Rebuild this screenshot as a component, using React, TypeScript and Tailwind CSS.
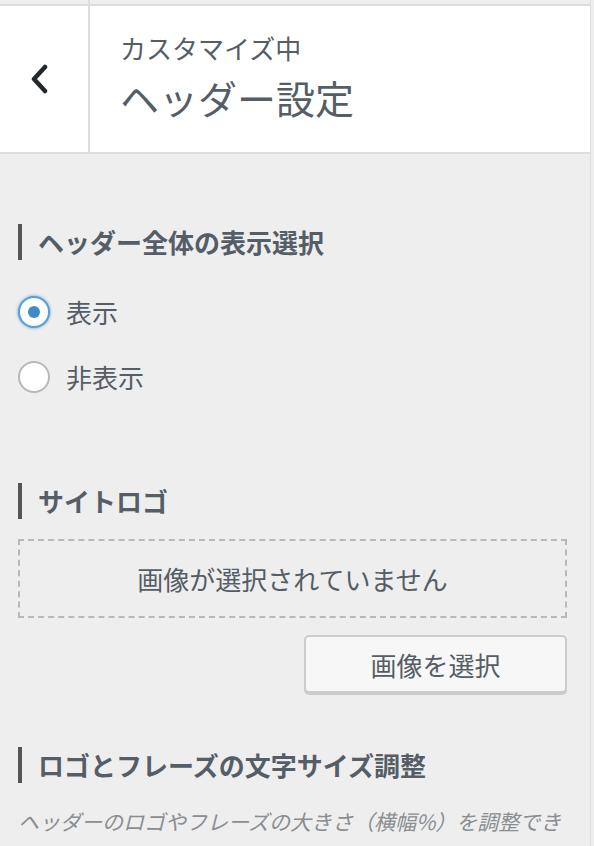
const font = {
  fontFamily: '"Noto Sans CJK JP", "Noto Sans", "Liberation Sans", sans-serif',
};

function SectionTitle({ children }: { children: string }) {
  return (
    <div className="flex items-center h-[36px]">
      <div className="w-[4px] h-[36px] bg-[#555]" />
      <h3 className="ml-[16px] text-[26px] leading-[36px] font-bold text-[#555d66]">{children}</h3>
    </div>
  );
}

function Radio({ label, checked }: { label: string; checked?: boolean }) {
  return (
    <label className="flex items-center h-[32px]">
      {checked ? (
        <span className="w-[32px] h-[32px] rounded-full bg-white border-2 border-[#5b9dd9] shadow-[0_0_3px_rgba(30,140,190,0.8)] flex items-center justify-center">
          <span className="w-[12px] h-[12px] rounded-full bg-[#3f8bc4]" />
        </span>
      ) : (
        <span className="w-[32px] h-[32px] rounded-full bg-white border-2 border-[#b4b9be]" />
      )}
      <span className="ml-[16px] text-[26px] leading-[32px] text-[#555d66]">{label}</span>
    </label>
  );
}

export default function App() {
  return (
    <div className="w-[594px] h-[846px] bg-[#eee] overflow-hidden" style={font}>
      <div className="w-[591px] h-full border-r border-[#ddd]">
        {/* top strip */}
        <div className="h-[4px] w-[90px] border-r-2 border-[#ddd]" />

        {/* header */}
        <div className="flex h-[150px] bg-white border-y-2 border-[#ddd]">
          <button className="w-[90px] h-full border-r-2 border-[#ddd] flex items-center justify-center pr-[8px]">
            <svg width="20" height="30" viewBox="0 0 20 30">
              <polyline
                points="15,3 4,15 15,27"
                fill="none"
                stroke="#23282d"
                strokeWidth="4.5"
                strokeLinecap="round"
                strokeLinejoin="round"
              />
            </svg>
          </button>
          <div className="pl-[30px] pt-[22px]">
            <div className="text-[26px] leading-[40px] text-[#555d66]">カスタマイズ中</div>
            <div className="text-[39px] leading-[50px] mt-[4px] text-[#555d66]">ヘッダー設定</div>
          </div>
        </div>

        {/* body */}
        <div className="pl-[18px] pr-[23px] pt-[70px]">
          <SectionTitle>ヘッダー全体の表示選択</SectionTitle>
          <div className="mt-[36px] flex flex-col gap-[33px]">
            <Radio label="表示" checked />
            <Radio label="非表示" />
          </div>

          <div className="mt-[90px]">
            <SectionTitle>サイトロゴ</SectionTitle>
          </div>
          <div className="mt-[20px] h-[79px] border-2 border-dashed border-[#b4b9be] flex items-center justify-center">
            <span className="text-[26px] text-[#555d66]">画像が選択されていません</span>
          </div>
          <div className="mt-[17px] flex justify-end">
            <button className="w-[263px] h-[58px] rounded-[5px] bg-[#f7f7f7] border-2 border-[#ccc] shadow-[0_2px_0_#ccc] text-[26px] text-[#555d66]">
              画像を選択
            </button>
          </div>

          <div className="mt-[54px]">
            <SectionTitle>ロゴとフレーズの文字サイズ調整</SectionTitle>
          </div>
          <p className="mt-[18px] text-[21px] leading-[40px] italic text-[#8a8d91] w-[550px]">
            ヘッダーのロゴやフレーズの大きさ（横幅%）を調整できます。
          </p>
        </div>
      </div>
    </div>
  );
}
